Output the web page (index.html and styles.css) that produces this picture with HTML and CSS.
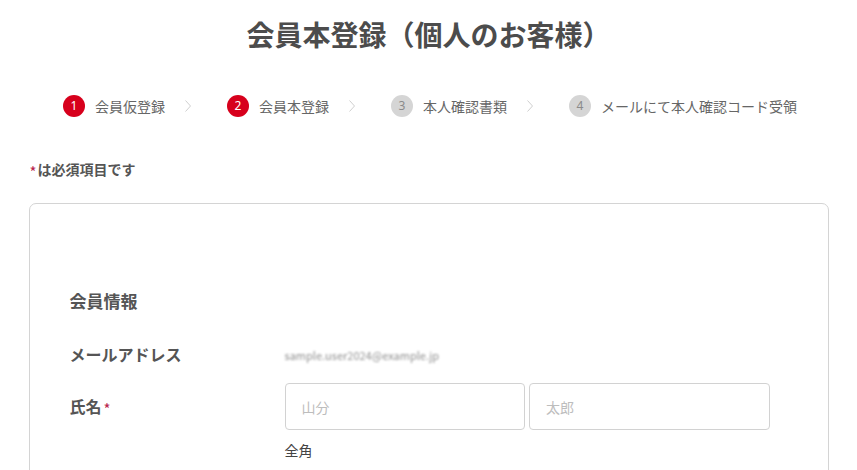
FILE: index.html
```html
<!DOCTYPE html>
<html lang="ja">
<head>
<meta charset="utf-8">
<title>会員本登録（個人のお客様）</title>
<link rel="stylesheet" href="styles.css">
</head>
<body>
<div class="page">
  <h1 class="title">会員本登録（個人のお客様）</h1>

  <ol class="steps">
    <li class="step active"><span class="num">1</span><span class="label">会員仮登録</span></li>
    <li class="sep"><svg width="6" height="12" viewBox="0 0 6 12"><polyline points="0.5,0.5 5.5,6 0.5,11.5" fill="none" stroke="#cfcfcf" stroke-width="1"/></svg></li>
    <li class="step active"><span class="num">2</span><span class="label">会員本登録</span></li>
    <li class="sep"><svg width="6" height="12" viewBox="0 0 6 12"><polyline points="0.5,0.5 5.5,6 0.5,11.5" fill="none" stroke="#cfcfcf" stroke-width="1"/></svg></li>
    <li class="step"><span class="num">3</span><span class="label">本人確認書類</span></li>
    <li class="sep"><svg width="6" height="12" viewBox="0 0 6 12"><polyline points="0.5,0.5 5.5,6 0.5,11.5" fill="none" stroke="#cfcfcf" stroke-width="1"/></svg></li>
    <li class="step"><span class="num">4</span><span class="label">メールにて本人確認コード受領</span></li>
  </ol>

  <p class="required-note"><span class="req">*</span>は必須項目です</p>

  <div class="card">
    <h2 class="section-title">会員情報</h2>

    <div class="row row-email">
      <div class="row-label">メールアドレス</div>
      <div class="row-value"><span class="masked">sample.user2024@example.jp</span></div>
    </div>

    <div class="row row-name">
      <div class="row-label name-label">氏名<span class="req">*</span></div>
      <div class="row-value">
        <div class="inputs">
          <input class="field" type="text" placeholder="山分">
          <input class="field" type="text" placeholder="太郎">
        </div>
        <div class="hint">全角</div>
      </div>
    </div>
  </div>
</div>
</body>
</html>
```

FILE: styles.css
```css
* { box-sizing: border-box; }

html, body {
  margin: 0;
  padding: 0;
  background: #ffffff;
}

body {
  font-family: "Noto Sans CJK JP", "Noto Sans", sans-serif;
  color: #4f4f4f;
}

.page {
  width: 800px;
  margin: 0 auto;
}

.title {
  margin: 0;
  padding-top: 14px;
  font-size: 28px;
  line-height: 40px;
  font-weight: 700;
  text-align: center;
  color: #4c4c4c;
}

.steps {
  list-style: none;
  margin: 41px 0 0;
  padding: 0 0 0 3px;
  display: flex;
  justify-content: center;
  align-items: center;
  height: 22px;
}

.step {
  display: flex;
  align-items: center;
  gap: 10px;
}

.num {
  width: 22px;
  height: 22px;
  border-radius: 50%;
  background: #d5d5d5;
  color: #8a8a8a;
  font-size: 12px;
  line-height: 22px;
  text-align: center;
  font-family: "Noto Sans", sans-serif;
}

.step.active .num {
  background: #d7001c;
  color: #ffffff;
}

.label {
  font-size: 14px;
  line-height: 22px;
  color: #666666;
  font-weight: 400;
}

.sep {
  display: flex;
  align-items: center;
  margin: 0 36px 0 20px;
}

.sep svg { display: block; }

.required-note {
  margin: 42px 0 0;
  padding-left: 1px;
  font-size: 14px;
  line-height: 20px;
  font-weight: 700;
  color: #555555;
}

.req {
  display: inline-block;
  color: #b8244c;
  font-weight: 400;
  font-size: 15px;
  line-height: 1;
  transform: translateY(3px);
  margin-right: 1px;
}

.card {
  margin-top: 24px;
  border: 1px solid #d4d4d4;
  border-radius: 7px;
  padding: 85px 40px 40px;
  min-height: 300px;
}

.section-title {
  margin: 0 0 29px;
  font-size: 17px;
  line-height: 24px;
  font-weight: 700;
  color: #555555;
}

.row {
  display: grid;
  grid-template-columns: 215px 485px;
}

.row-label {
  font-size: 16px;
  font-weight: 700;
  color: #555555;
  line-height: 24px;
}

.row-email .row-value {
  line-height: 22px;
}

.masked {
  font-size: 11px;
  color: #8f8f8f;
  filter: blur(1px);
}

.row-name {
  margin-top: 17px;
}

.name-label {
  line-height: 47px;
}

.name-label .req {
  margin-left: 2px;
  transform: translateY(2px);
}

.inputs {
  display: flex;
  gap: 4px;
}

.field {
  width: 241px;
  height: 47px;
  border: 1px solid #d2d2d2;
  border-radius: 4px;
  padding: 0 16px;
  font-family: "Noto Sans CJK JP", sans-serif;
  font-size: 14px;
  color: #444444;
  background: #ffffff;
  outline: none;
}

.field::placeholder {
  color: #bdbdbd;
}

.hint {
  margin-top: 10px;
  font-size: 14px;
  line-height: 20px;
  color: #444444;
}
```
